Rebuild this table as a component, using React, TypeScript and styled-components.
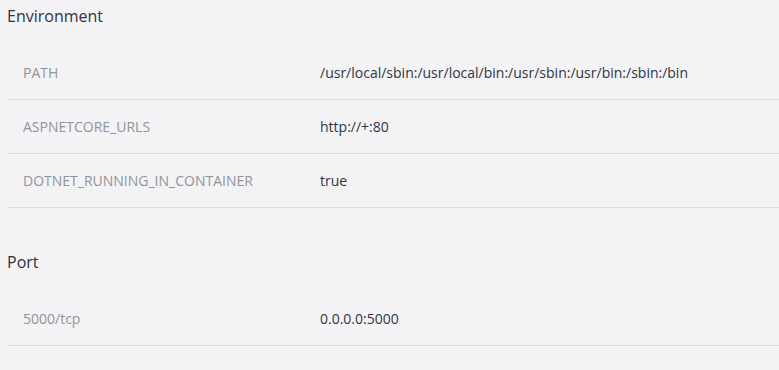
import React from "react";
import styled, { createGlobalStyle } from "styled-components";

const GlobalStyle = createGlobalStyle`
  html, body {
    margin: 0;
    padding: 0;
    background: #f3f3f6;
  }
  body {
    font-family: "Open Sans", "Noto Sans", sans-serif;
    color: #333840;
  }
`;

const Page = styled.div`
  padding: 0 0 0 7px;
  display: flex;
  flex-direction: column;
  gap: 38px;
`;

const Section = styled.section`
  display: flex;
  flex-direction: column;
`;

const Heading = styled.h3`
  margin: 0 0 14px;
  font-size: 16px;
  font-weight: 400;
  line-height: 32px;
  color: #2e333b;
`;

const Row = styled.div`
  display: grid;
  grid-template-columns: 297px 1fr;
  align-items: center;
  height: 53px;
  border-bottom: 1px solid #dcdce0;
`;

const Cell = styled.div<{ $muted?: boolean }>`
  padding: 0 16px;
  font-size: 14px;
  color: ${(p) => (p.$muted ? "#8f949b" : "#30353d")};
  white-space: nowrap;
`;

const sections = [
  {
    title: "Environment",
    rows: [
      ["PATH", "/usr/local/sbin:/usr/local/bin:/usr/sbin:/usr/bin:/sbin:/bin"],
      ["ASPNETCORE_URLS", "http://+:80"],
      ["DOTNET_RUNNING_IN_CONTAINER", "true"],
    ],
  },
  {
    title: "Port",
    rows: [["5000/tcp", "0.0.0.0:5000"]],
  },
];

const App: React.FC = () => {
  return (
    <>
      <GlobalStyle />
      <Page>
        {sections.map((s) => (
          <Section key={s.title}>
            <Heading>{s.title}</Heading>
            {s.rows.map(([k, v]) => (
              <Row key={k}>
                <Cell $muted>{k}</Cell>
                <Cell>{v}</Cell>
              </Row>
            ))}
          </Section>
        ))}
      </Page>
    </>
  );
};

export default App;
